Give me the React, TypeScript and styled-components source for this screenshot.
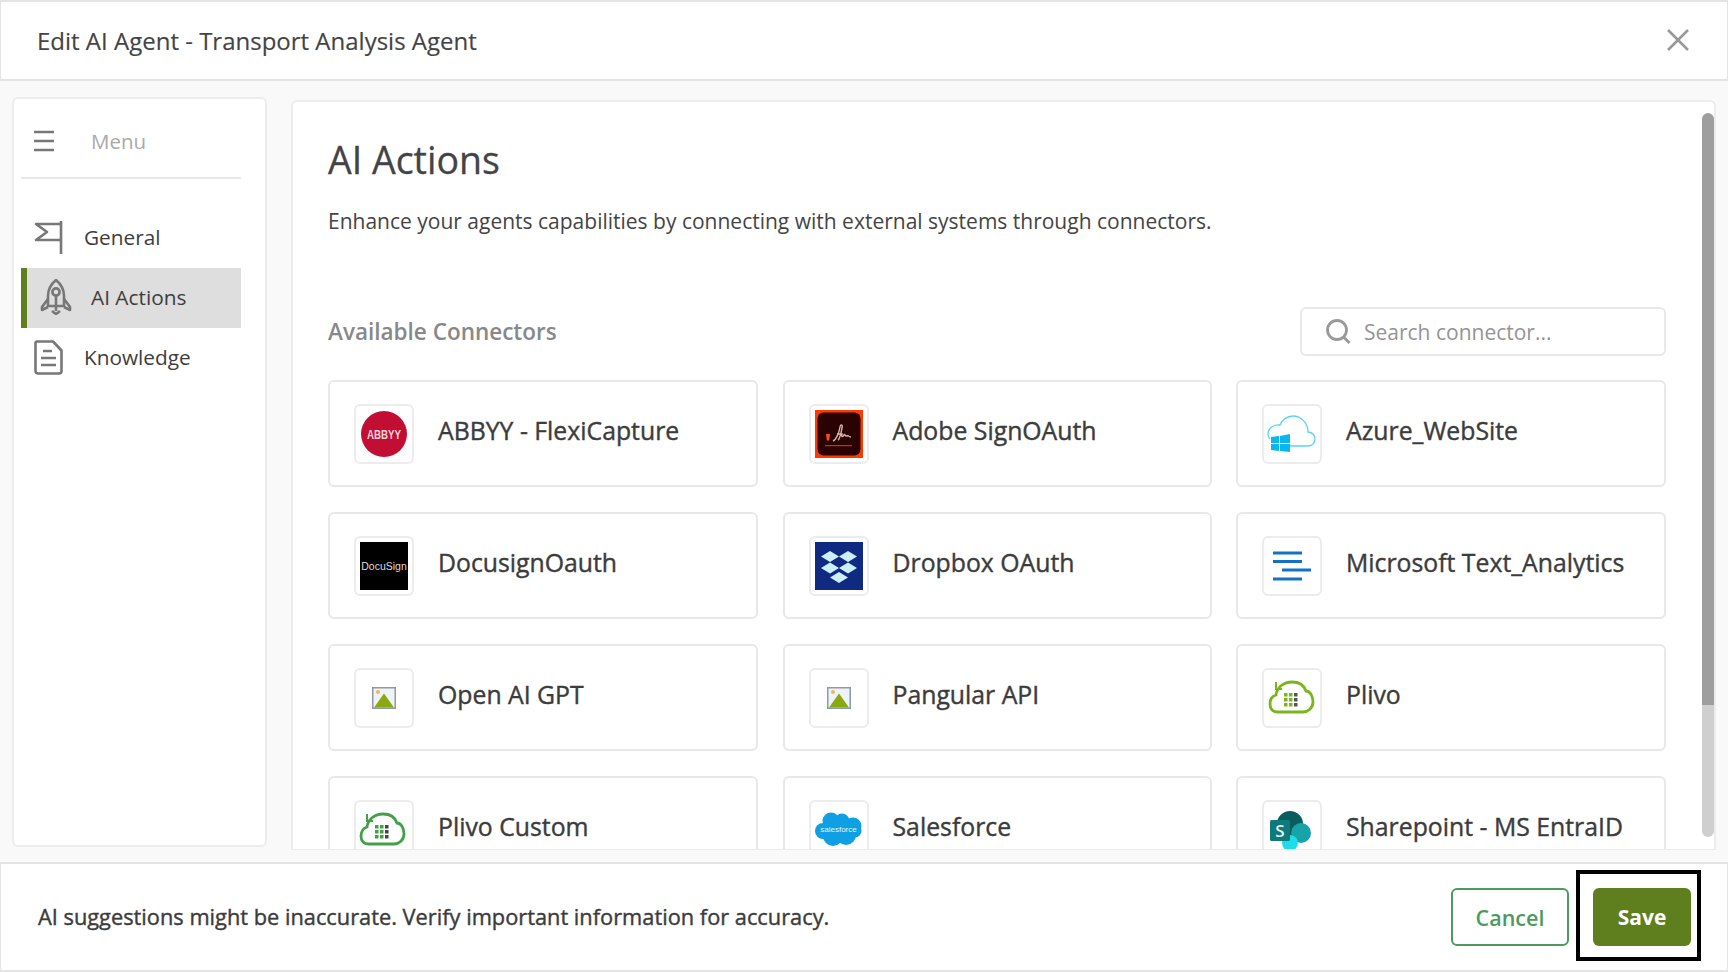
import React from "react";
import styled, { createGlobalStyle } from "styled-components";

const Global = createGlobalStyle`
  html, body { margin: 0; padding: 0; background: #f9f9f9; }
  * { box-sizing: border-box; }
  body { font-family: "Open Sans", "Noto Sans", sans-serif; color: #333; }
`;

const Page = styled.div`
  width: 1728px;
  height: 972px;
  display: flex;
  flex-direction: column;
  overflow: hidden;
  background: #f9f9f9;
`;
const Header = styled.header`
  height: 81px;
  flex: none;
  display: flex;
  align-items: center;
  justify-content: space-between;
  padding: 0 38px 0 36px;
  background: #fff;
  border: 1px solid #e4e4e4;
  border-top-width: 2px;
  border-bottom-width: 2px;
`;
const Title = styled.h1`
  margin: -1px 0 0;
  font-size: 24px;
  font-weight: 400;
  color: #444;
  -webkit-text-stroke: 0.15px #444;
`;
const CloseButton = styled.button`
  width: 22px;
  height: 22px;
  padding: 0;
  border: 0;
  background: none;
  display: block;
  margin-top: -2px;
  svg { display: block; }
`;
const Body = styled.div`
  flex: 1;
  min-height: 0;
  display: flex;
  align-items: flex-start;
  padding: 16px 12px 0 12px;
`;
const Sidebar = styled.nav`
  width: 255px;
  height: 750px;
  flex: none;
  background: #fff;
  border: 2px solid #ececec;
  border-radius: 6px;
  padding: 0 24px 0 7px;
`;
const MenuHead = styled.div`
  height: 80px;
  display: flex;
  align-items: center;
  border-bottom: 2px solid #e8e8e8;
  padding: 5px 0 0 12px;
  margin-bottom: 35px;
`;
const MenuLabel = styled.span`
  font-size: 20.5px;
  color: #aaa;
  margin-left: 36px;
`;
const NavItem = styled.div<{ $active?: boolean }>`
  height: 60px;
  display: flex;
  align-items: center;
  font-size: 20.8px;
  color: #3d3d3d;
  background: ${(p) => (p.$active ? "#dedede" : "transparent")};
  border-left: 6px solid ${(p) => (p.$active ? "#5f7f1f" : "transparent")};
  padding: 0 0 2px ${(p) => (p.$active ? "13px" : "7px")};
  gap: ${(p) => (p.$active ? "19px" : "21px")};
  svg { flex: none; display: block; }
`;
const NavList = styled.div`
  margin-top: -6px;
  display: flex;
  flex-direction: column;
`;
const Panel = styled.main`
  margin-left: 24px;
  margin-top: 3px;
  flex: 1;
  height: 750px;
  display: flex;
  background: #fff;
  border: 2px solid #ececec;
  border-bottom-width: 1px;
  border-radius: 6px 6px 0 0;
  overflow: hidden;
`;
const Content = styled.div`
  flex: 1;
  min-width: 0;
  overflow: hidden;
  padding: 35px 0 0 35px;
`;
const PageTitle = styled.h2`
  margin: 0;
  font-size: 37.5px;
  line-height: 46px;
  font-weight: 400;
  color: #444;
  -webkit-text-stroke: 0.3px #444;
`;
const Description = styled.p`
  margin: 23px 0 0;
  font-size: 21px;
  line-height: 30px;
  color: #444;
`;
const ConnectorsBar = styled.div`
  margin-top: 71px;
  width: 1338px;
  height: 49px;
  display: flex;
  align-items: center;
  justify-content: space-between;
`;
const SectionTitle = styled.h3`
  margin: 0;
  font-size: 22.5px;
  font-weight: 600;
  color: #888;
`;
const SearchBox = styled.div`
  width: 366px;
  height: 49px;
  display: flex;
  align-items: center;
  gap: 13px;
  padding-left: 24px;
  border: 2px solid #e8e8e8;
  border-radius: 6px;
  font-size: 21px;
  color: #949494;
  svg { flex: none; display: block; }
`;
const Grid = styled.div`
  margin-top: 24px;
  width: 1338px;
  display: grid;
  grid-template-columns: 430px 429px 430px;
  column-gap: 24.5px;
  row-gap: 25px;
`;
const Card = styled.div`
  height: 107px;
  display: flex;
  align-items: center;
  gap: 24px;
  padding-left: 24px;
  background: #fff;
  border: 2px solid #e8e8e8;
  border-radius: 6px;
`;
const IconBox = styled.div`
  width: 60px;
  height: 60px;
  flex: none;
  border: 2px solid #ececec;
  border-radius: 6px;
  display: flex;
  align-items: center;
  justify-content: center;
  svg { display: block; }
`;
const CardName = styled.span`
  font-size: 24.8px;
  font-weight: 400;
  color: #3c3c3c;
  margin-top: -7px;
  -webkit-text-stroke: 0.4px #3c3c3c;
`;
const ScrollRail = styled.div`
  width: 12px;
  margin: 11px 0 12px 0;
  flex: none;
  background: #cfcfcf;
  border-radius: 6px;
  overflow: hidden;
`;
const ScrollThumb = styled.div<{ $size: number }>`
  height: ${(p) => p.$size}px;
  background: #9e9e9e;
  border-radius: 6px 6px 0 0;
`;
const Footer = styled.footer`
  height: 110px;
  flex: none;
  display: flex;
  align-items: center;
  justify-content: space-between;
  padding: 0 0 0 37px;
  background: #fff;
  border: 1px solid #e4e4e4;
  border-top-width: 2px;
  border-bottom-width: 2px;
`;
const Notice = styled.span`
  font-size: 21.8px;
  font-weight: 400;
  color: #3c3c3c;
  margin-top: -2px;
  -webkit-text-stroke: 0.4px #3c3c3c;
`;
const Actions = styled.div`
  display: flex;
  align-items: flex-start;
  gap: 7px;
  margin: -3px 26px 0 0;
`;
const CancelButton = styled.button`
  width: 118px;
  height: 58px;
  margin-top: 18px;
  background: #fff;
  border: 2px solid #4e9a5e;
  border-radius: 6px;
  color: #4e9a5e;
  font: 600 21.5px "Open Sans", sans-serif;
`;
const FocusFrame = styled.div`
  padding: 14px 6px 11px 13px;
  border: 4px solid #000;
  display: flex;
`;
const SaveButton = styled.button`
  width: 98px;
  height: 58px;
  background: #5f7f1f;
  border: 0;
  border-radius: 6px;
  color: #fff;
  font: 700 21px "Open Sans", sans-serif;
`;

const svgStroke = { fill: "none", stroke: "#777", strokeWidth: 2.6 };

const HamburgerIcon = () => (
  <svg width="22" height="22" viewBox="0 0 22 22" {...svgStroke}>
    <path d="M1 2h20M1 11h20M1 20h20" />
  </svg>
);
const FlagIcon = () => (
  <svg width="29" height="34" viewBox="0 0 29 34" {...svgStroke}>
    <path d="M27 1v33M27 4H2l11 8-11 8h25" strokeLinejoin="round" />
  </svg>
);
const RocketIcon = () => (
  <svg width="32" height="36" viewBox="0 0 32 36" {...svgStroke}>
    <path d="M16 1C10 6 8 11 8 17v10h16V17c0-6-2-11-8-16Z" />
    <circle cx="16" cy="13" r="3.6" />
    <path d="M16 17v15M8 20 2 28v3l6-3M24 20l6 8v3l-6-3M12 32l4 3 4-3" strokeLinejoin="round" />
  </svg>
);
const DocIcon = () => (
  <svg width="29" height="35" viewBox="0 0 29 35" {...svgStroke}>
    <path d="M3 1.5h16l8.500 9V31a2.500 2.500 0 0 1-2.500 2.500H4A2.500 2.500 0 0 1 1.500 31V3A1.500 1.500 0 0 1 3 1.500Z" strokeLinejoin="round" />
    <path d="M9 11h9M7 18h15M7 25h15" />
  </svg>
);
const CloseIcon = () => (
  <svg width="22" height="22" viewBox="0 0 22 22" fill="none" stroke="#999" strokeWidth="2.6">
    <path d="M1 1l20 20M21 1 1 21" />
  </svg>
);
const SearchIcon = () => (
  <svg width="25" height="25" viewBox="0 0 25 25" fill="none" stroke="#999" strokeWidth="2.8">
    <circle cx="11" cy="11" r="9.500" />
    <path d="m17.500 18 6 6" />
  </svg>
);

const LOGO = 48;
const Abbyy = () => (
  <svg width={LOGO} height={LOGO} viewBox="0 0 48 48">
    <circle cx="24" cy="24" r="23" fill="#c20e33" />
    <text transform="translate(24 29) scale(.75 1)" textAnchor="middle" fontFamily="Liberation Sans, sans-serif" fontWeight="700" fontSize="13" fill="#f6d6dc">ABBYY</text>
  </svg>
);
const AdobeSign = () => (
  <svg width={LOGO} height={LOGO} viewBox="0 0 48 48">
    <rect width="48" height="48" fill="#fa3c00" />
    <rect x="2.500" y="2.500" width="43" height="43" rx="6" fill="#2a0202" />
    <path d="M11 24h4l-.8 6.500h-2.400Z" fill="#f0511f" />
    <path d="M18 31c3-1 6-8 7-14 .4-3 3-3 2 1-1 5-2 11-4 12M22 24h5c-1 2 0 4 2 1 1-2 1 2 3 1 2-1 1 1 4 1" fill="none" stroke="#d8b8a8" strokeWidth="1.400" />
    <rect x="10" y="35" width="27" height="1.200" fill="#c8340f" />
  </svg>
);
const Docusign = () => (
  <svg width={LOGO} height={LOGO} viewBox="0 0 48 48">
    <rect width="48" height="48" fill="#000" />
    <text x="24" y="28" textAnchor="middle" fontFamily="Liberation Sans, sans-serif" fontSize="10.500" fill="#ddd">DocuSign</text>
  </svg>
);
const Dropbox = () => (
  <svg width={LOGO} height={LOGO} viewBox="0 0 48 48">
    <rect width="48" height="48" fill="#0f2a80" />
    <path d="M15 9l9 5.500-9 5.500-9-5.500ZM33 9l9 5.500-9 5.500-9-5.500ZM15 20.500l9 5.500-9 5.500-9-5.500ZM33 20.500l9 5.500-9 5.500-9-5.500ZM24 30l9 5.500-9 5.500-9-5.500Z" fill="#cdeefb" />
  </svg>
);
const AzureWeb = () => (
  <svg width="54" height="54" viewBox="3 2 54 54">
    <path d="M24 41H46C51 41 53 37 53 34 53 30 50 27 46 27 46 18 39 11 31 11 25 11 20 15 18 20 11 19 6 24 6 29 6 31 7 33 8 34" fill="none" stroke="#5ad2f6" strokeWidth="1.300" />
    <path d="M9 32l8-1v7H9ZM18 31l10-2v9H18ZM9 39h8v7l-8-1ZM18 39h10v8l-10-1Z" fill="#0bb5f0" />
  </svg>
);
const TextAnalytics = () => (
  <svg width="54" height="54" viewBox="3 2 54 54" fill="none" stroke="#1272c8" strokeWidth="3">
    <path d="M11 16h29M11 24.500h29M20 33h29M11 42h29" />
  </svg>
);
const Placeholder = () => (
  <svg width="24" height="22" viewBox="0 0 24 22">
    <rect x=".75" y=".75" width="22.500" height="20.500" fill="#eef3f6" stroke="#8d9aa5" strokeWidth="1.500" />
    <circle cx="6" cy="5" r="2" fill="#f5b556" />
    <path d="M2 20.500 12 6.500l10 14Z" fill="#8aa80f" />
  </svg>
);
const PlivoCloud = ({ color, dark, shift }: { color: string; dark: string; shift: number }) => {
  const dots: React.ReactElement[] = [];
  for (let r = 0; r < 3; r++) {
    for (let c = 0; c < 3; c++) {
      dots.push(<rect key={`${r}-${c}`} x={23 + c * 5} y={24 + r * 5} width="3.500" height="3.500" fill={c === 2 ? dark : color} />);
    }
  }
  return (
    <svg width="54" height="54" viewBox={`${shift} 2 54 54`}>
      <path d="M17 43C11 43 9 39 9 35 9 30 12 27 15 26 16 18 23 13 31 13 38 13 43 16 45 22 49 22 52 27 52 33 52 39 47 43 42 43Z" fill="none" stroke={color} strokeWidth="2.800" />
      <path d="M15 13v7h6" fill="none" stroke={color} strokeWidth="2" />
      {dots}
    </svg>
  );
};
const Salesforce = () => (
  <svg width="54" height="54" viewBox="3 2 54 54">
    <g fill="#0fa0e3">
      <circle cx="22" cy="20" r="8.500" />
      <circle cx="33" cy="20" r="7.500" />
      <circle cx="44" cy="25" r="8.500" />
      <circle cx="14" cy="30" r="8" />
      <circle cx="24" cy="35" r="10" />
      <circle cx="37" cy="34" r="10" />
      <circle cx="46" cy="30" r="6.500" />
      <rect x="14" y="20" width="30" height="14" />
    </g>
    <text x="29.500" y="30.500" textAnchor="middle" fontFamily="Liberation Sans, sans-serif" fontSize="8" fill="#e2f5fd">salesforce</text>
  </svg>
);
const Sharepoint = () => (
  <svg width="54" height="54" viewBox="4 2 54 54">
    <circle cx="29" cy="23" r="13" fill="#0b5c5c" />
    <circle cx="40" cy="32" r="10" fill="#18a3a8" />
    <circle cx="29" cy="42" r="8" fill="#1fdcec" />
    <rect x="9" y="19" width="20" height="21" rx="1.500" fill="#0e7a7c" />
    <text x="19" y="35.500" textAnchor="middle" fontFamily="Open Sans, sans-serif" fontWeight="600" fontSize="17" fill="#e6f4f4">S</text>
  </svg>
);

const connectors: { name: string; logo: React.ReactNode }[] = [
  { name: "ABBYY - FlexiCapture", logo: <Abbyy /> },
  { name: "Adobe SignOAuth", logo: <AdobeSign /> },
  { name: "Azure_WebSite", logo: <AzureWeb /> },
  { name: "DocusignOauth", logo: <Docusign /> },
  { name: "Dropbox OAuth", logo: <Dropbox /> },
  { name: "Microsoft Text_Analytics", logo: <TextAnalytics /> },
  { name: "Open AI GPT", logo: <Placeholder /> },
  { name: "Pangular API", logo: <Placeholder /> },
  { name: "Plivo", logo: <PlivoCloud color="#7ab51d" dark="#555" shift={4} /> },
  { name: "Plivo Custom", logo: <PlivoCloud color="#43a047" dark="#444" shift={5} /> },
  { name: "Salesforce", logo: <Salesforce /> },
  { name: "Sharepoint - MS EntraID", logo: <Sharepoint /> },
];

export default function App() {
  return (
    <Page>
      <Global />
      <Header>
        <Title>Edit AI Agent - Transport Analysis Agent</Title>
        <CloseButton aria-label="Close"><CloseIcon /></CloseButton>
      </Header>
      <Body>
        <Sidebar>
          <MenuHead>
            <HamburgerIcon />
            <MenuLabel>Menu</MenuLabel>
          </MenuHead>
          <NavList>
            <NavItem><FlagIcon />General</NavItem>
            <NavItem $active><RocketIcon />AI Actions</NavItem>
            <NavItem><DocIcon />Knowledge</NavItem>
          </NavList>
        </Sidebar>
        <Panel>
          <Content>
            <PageTitle>AI Actions</PageTitle>
            <Description>Enhance your agents capabilities by connecting with external systems through connectors.</Description>
            <ConnectorsBar>
              <SectionTitle>Available Connectors</SectionTitle>
              <SearchBox><SearchIcon />Search connector...</SearchBox>
            </ConnectorsBar>
            <Grid>
              {connectors.map((c) => (
                <Card key={c.name}>
                  <IconBox>{c.logo}</IconBox>
                  <CardName>{c.name}</CardName>
                </Card>
              ))}
            </Grid>
          </Content>
          <ScrollRail><ScrollThumb $size={592} /></ScrollRail>
        </Panel>
      </Body>
      <Footer>
        <Notice>AI suggestions might be inaccurate. Verify important information for accuracy.</Notice>
        <Actions>
          <CancelButton>Cancel</CancelButton>
          <FocusFrame>
            <SaveButton>Save</SaveButton>
          </FocusFrame>
        </Actions>
      </Footer>
    </Page>
  );
}
